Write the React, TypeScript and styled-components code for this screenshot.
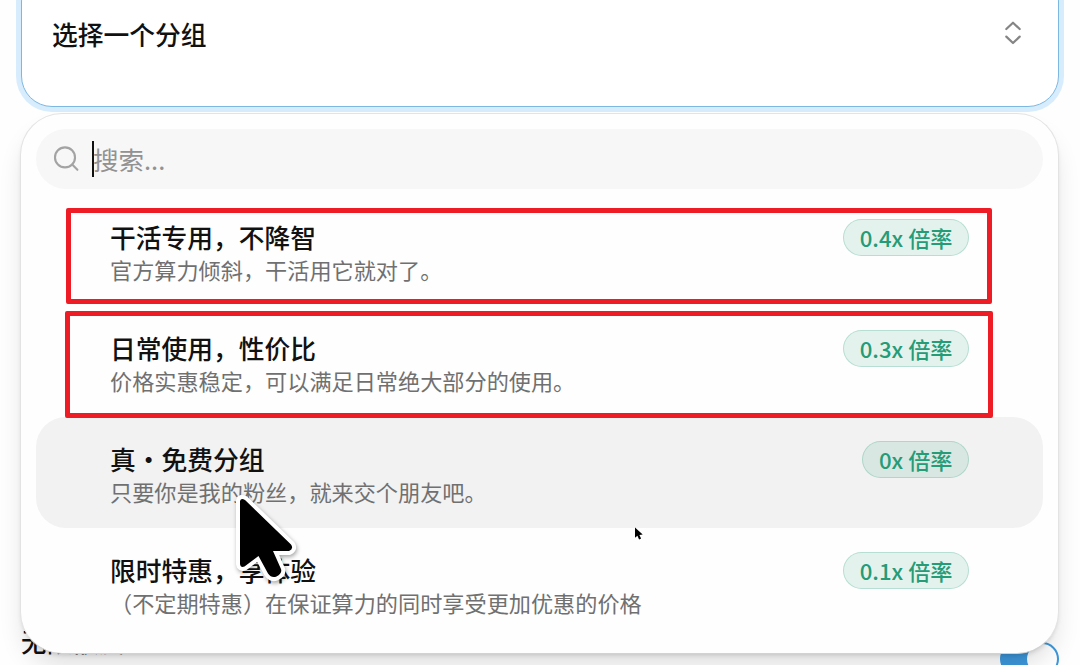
import styled, { createGlobalStyle } from 'styled-components';

interface GroupOption {
  name: string;
  description: string;
  ratio: string;
  active?: boolean;
}

const groups: GroupOption[] = [
  { name: '干活专用，不降智', description: '官方算力倾斜，干活用它就对了。', ratio: '0.4x' },
  { name: '日常使用，性价比', description: '价格实惠稳定，可以满足日常绝大部分的使用。', ratio: '0.3x' },
  { name: '真・免费分组', description: '只要你是我的粉丝，就来交个朋友吧。', ratio: '0x', active: true },
  { name: '限时特惠，享体验', description: '（不定期特惠）在保证算力的同时享受更加优惠的价格', ratio: '0.1x' },
];

export default function App() {
  return (
    <>
      <GlobalStyle />
      <Page>
        <SelectTrigger>
          <span>选择一个分组</span>
          <ChevronsIcon viewBox="0 0 18 24">
            <path d="M2.3 8 9 1.7 15.7 8M2.3 15.6 9 22l6.7-6.4" />
          </ChevronsIcon>
        </SelectTrigger>

        <QuotaField>
          <span>无限额度</span>
          <Toggle>
            <ToggleThumb />
          </Toggle>
        </QuotaField>

        <Popover>
          <SearchBox>
            <SearchIcon viewBox="0 0 26 26">
              <circle cx="12" cy="11.4" r="10" />
              <path d="m19.200 18.600 5.200 5.200" />
            </SearchIcon>
            <Caret />
            <span>搜索...</span>
          </SearchBox>

          <OptionList>
            {groups.map((group) => (
              <Option key={group.name} $active={group.active}>
                <OptionText>
                  <OptionName>{group.name}</OptionName>
                  <OptionDescription>{group.description}</OptionDescription>
                </OptionText>
                <RatioBadge>{group.ratio} 倍率</RatioBadge>
              </Option>
            ))}
          </OptionList>
        </Popover>

        <Highlight $top={207.5} $left={65.5} $width={926.5} $height={96.5} />
        <Highlight $top={311} $left={65} $width={927.5} $height={107} />

        <LargePointer viewBox="0 0 76 104">
          <path d="M10 11v63q.5 4 4.500 2.500L28.500 66l9.500 17.500q3.500 5 8.500 3 6-3 4.500-7.500L43 61h16q5-2 2-6.500L15 10q-4-2.500-5 1Z" />
        </LargePointer>
        <SmallPointer viewBox="0 0 10 14">
          <path d="M1 .5v10.200l2.400-2 1.700 3.800 2-.9-1.700-3.700 3.300-.3Z" />
        </SmallPointer>
      </Page>
    </>
  );
}

const GlobalStyle = createGlobalStyle`
  * {
    box-sizing: border-box;
  }

  body {
    margin: 0;
    background: #fefefe;
    font-family: 'Noto Sans CJK SC', sans-serif;
  }
`;

const Page = styled.main`
  position: relative;
  display: flex;
  flex-direction: column;
  width: 1080px;
  height: 665px;
  overflow: hidden;
  color: #111;
`;

const SelectTrigger = styled.div`
  display: flex;
  flex-shrink: 0;
  align-items: flex-start;
  justify-content: space-between;
  height: 137px;
  margin: -30px 21px 0;
  padding: 44px 36px 0 30px;
  border: 1.5px solid #7db8e2;
  border-radius: 31px;
  background: #fff;
  box-shadow: 0 0 0 5px #d7ecfc;
  font-size: 25.75px;
  font-weight: 500;
  line-height: 38px;
`;

const ChevronsIcon = styled.svg`
  width: 18px;
  height: 24px;
  margin-top: 6px;
  fill: none;
  stroke: #858585;
  stroke-width: 2.2;
  stroke-linecap: round;
  stroke-linejoin: round;
`;

const QuotaField = styled.div`
  display: flex;
  align-items: center;
  justify-content: space-between;
  height: 38px;
  margin: auto 21px 5px;
  font-size: 25.75px;
  font-weight: 500;
  line-height: 38px;
`;

const Toggle = styled.div`
  display: flex;
  justify-content: flex-end;
  width: 59px;
  height: 34px;
  margin-top: 36px;
  padding: 2px;
  border-radius: 17px;
  background: #3d98dc;
`;

const ToggleThumb = styled.div`
  width: 30px;
  height: 30px;
  border-radius: 50%;
  background: #fff;
`;

const Popover = styled.section`
  position: absolute;
  top: 113px;
  left: 20px;
  width: 1039px;
  height: 541px;
  padding: 15px;
  border: 1.5px solid #e3e3e3;
  border-bottom-color: #d2d2d2;
  border-radius: 42px;
  background: #fefefe;
  box-shadow:
    0 16px 26px -4px rgba(0, 0, 0, 0.12),
    0 3px 5px -2px rgba(0, 0, 0, 0.16);
`;

const SearchBox = styled.div`
  display: flex;
  align-items: center;
  height: 60px;
  padding-left: 17px;
  border-radius: 30px;
  background: #f7f7f7;
  color: #929292;
  font-size: 25.5px;
  line-height: 38px;
`;

const SearchIcon = styled.svg`
  width: 26px;
  height: 26px;
  margin-right: 13px;
  fill: none;
  stroke: #a3a3a3;
  stroke-width: 2.1;
  stroke-linecap: round;
`;

const Caret = styled.i`
  width: 2px;
  height: 36px;
  margin-right: -1px;
  background: #111;
`;

const OptionList = styled.div`
  display: flex;
  flex-direction: column;
  margin-top: 6px;
`;

const Option = styled.div<{ $active?: boolean }>`
  display: flex;
  align-items: flex-start;
  justify-content: space-between;
  height: 111px;
  padding: 24px 74px 0;
  border-radius: 30px;
  background: ${({ $active }) => ($active ? '#f2f2f2' : 'transparent')};
`;

const OptionText = styled.div`
  display: flex;
  flex-direction: column;
`;

const OptionName = styled.span`
  font-size: 25.75px;
  font-weight: 500;
  line-height: 35px;
`;

const OptionDescription = styled.span`
  color: #707070;
  font-size: 22.17px;
  line-height: 31px;
`;

const RatioBadge = styled.span`
  height: 37px;
  padding: 1px 15.5px 0;
  border: 1.5px solid rgba(16, 150, 110, 0.22);
  border-radius: 19px;
  background: rgba(16, 150, 110, 0.11);
  color: #259b76;
  font-size: 22.15px;
  font-weight: 500;
  line-height: 32px;
  white-space: nowrap;
`;

const Highlight = styled.div<{ $top: number; $left: number; $width: number; $height: number }>`
  position: absolute;
  top: ${({ $top }) => $top}px;
  left: ${({ $left }) => $left}px;
  width: ${({ $width }) => $width}px;
  height: ${({ $height }) => $height}px;
  border: 5px solid #ee1c25;
  border-radius: 2px;
`;

const LargePointer = styled.svg`
  position: absolute;
  top: 490px;
  left: 230px;
  width: 76px;
  height: 104px;
  fill: #000;
  stroke: #fff;
  stroke-width: 8;
  stroke-linejoin: round;
  paint-order: stroke;
  filter: drop-shadow(1px 2px 2px rgba(0, 0, 0, 0.35));
`;

const SmallPointer = styled.svg`
  position: absolute;
  top: 527px;
  left: 634px;
  width: 10px;
  height: 14px;
  fill: #000;
`;
